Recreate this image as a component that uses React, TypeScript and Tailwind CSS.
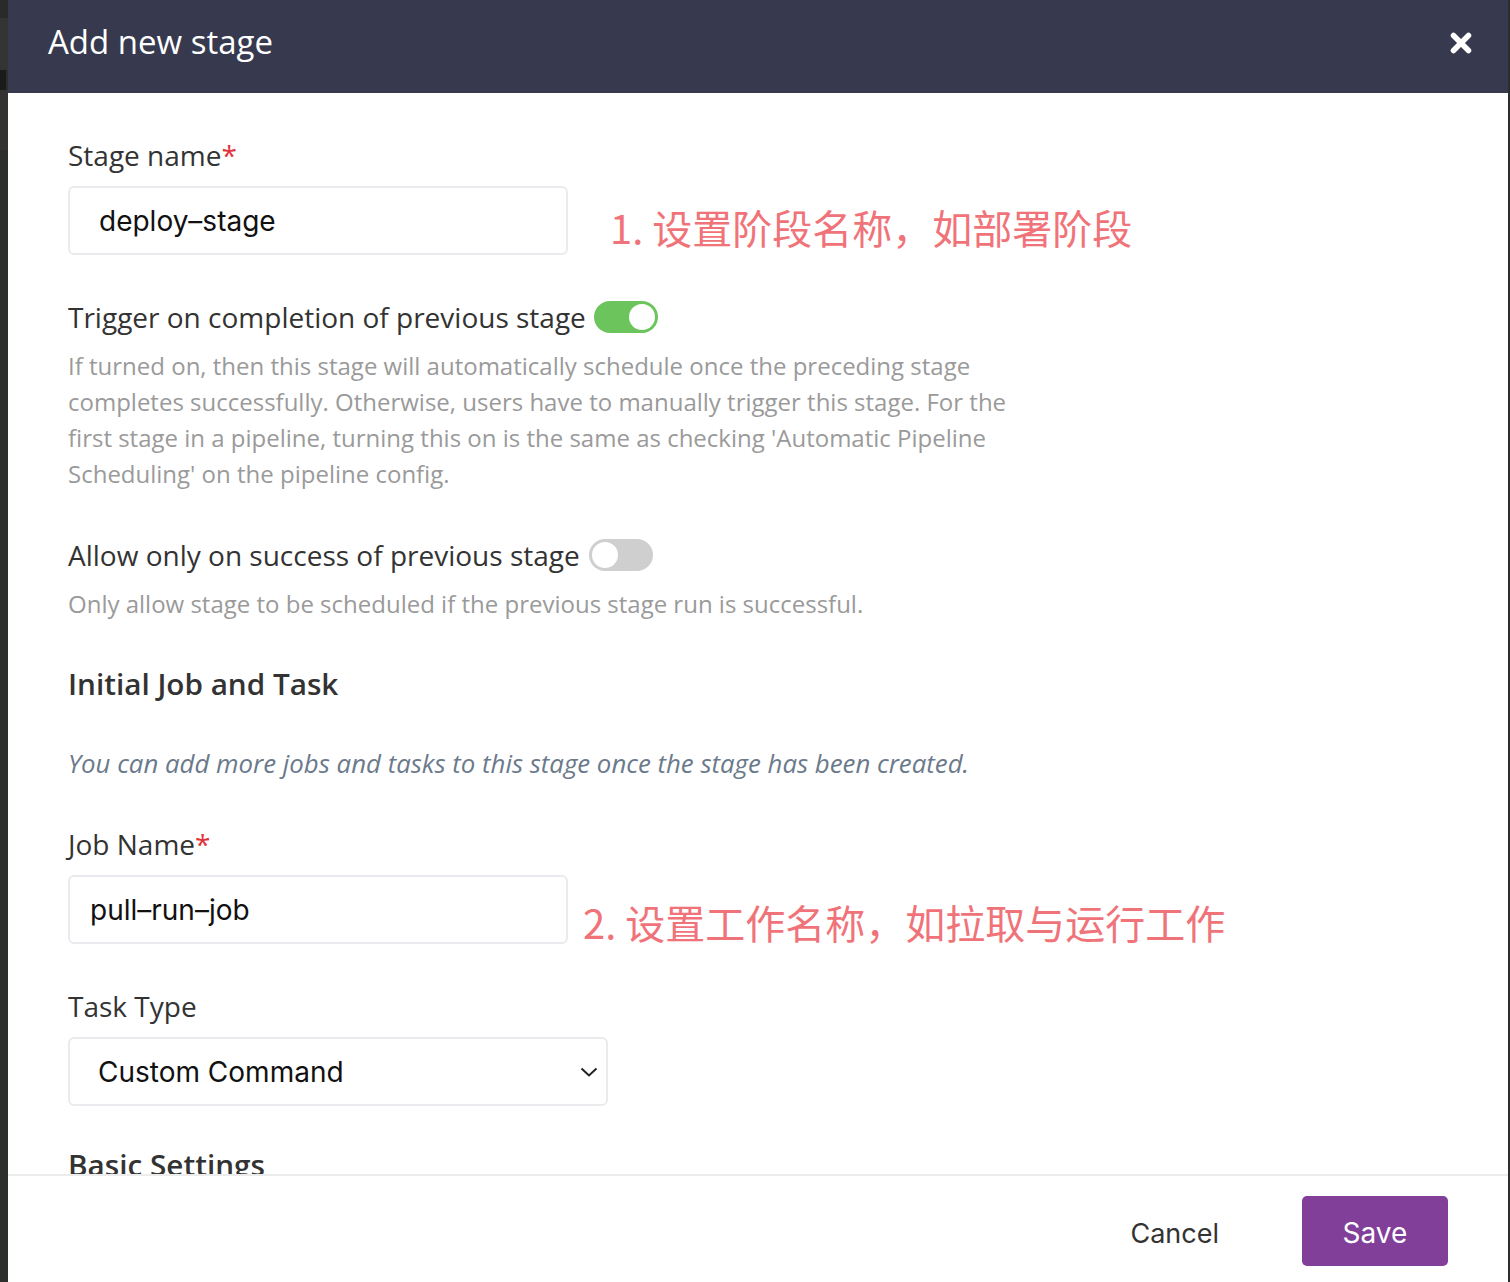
import React from "react";

const openSans = { fontFamily: '"Open Sans", "Noto Sans", sans-serif' };
const sysFont = { fontFamily: 'Inter, "Liberation Sans", sans-serif' };
const cjk = { fontFamily: '"Noto Sans CJK SC", "Noto Sans", sans-serif' };

function Toggle({ on }: { on: boolean }) {
  return (
    <span
      className={
        "inline-flex items-center w-[64px] h-[32px] rounded-full p-[3px] " +
        (on ? "bg-[#6cc55c] justify-end" : "bg-[#cfcfcf] justify-start")
      }
    >
      <span className="block w-[26px] h-[26px] rounded-full bg-white" />
    </span>
  );
}

function Label({ text, required }: { text: string; required?: boolean }) {
  return (
    <div className="text-[28px] leading-[36px] h-[36px] text-[#333333]">
      {text}
      {required && <span className="text-[#e0323b]">*</span>}
    </div>
  );
}

export default function App() {
  return (
    <div className="flex w-[1510px] h-[1282px] bg-[#2d2f2c] overflow-hidden" style={openSans}>
      <div className="w-[8px] flex flex-col">
        <div className="h-[18px] bg-[#2a2b29]" />
        <div className="h-[52px] bg-[#343432]" />
        <div className="h-[20px] bg-[#1a1a1a] w-[6px]" />
        <div className="h-[60px] bg-[#333331]" />
        <div className="flex-1 bg-[#2d2f2c]" />
      </div>
      <div className="w-[1500px] flex flex-col bg-white">
        <div className="h-[93px] shrink-0 bg-[#373a4f] flex items-center justify-between pl-[40px] pr-[36px]">
          <div className="text-white text-[33px] leading-[40px] mb-[10px]">Add new stage</div>
          <svg width="22" height="22" viewBox="0 0 22 22" className="mb-[8px]">
            <path d="M3.5 3.5 L18.5 18.5 M18.5 3.5 L3.5 18.5" stroke="white" strokeWidth="5.5" strokeLinecap="round" />
          </svg>
        </div>
        <div className="flex-1 overflow-hidden pl-[60px] pt-[44px]">
          <Label text="Stage name" required />
          <div className="flex items-center h-[69px] mt-[13px]">
            <div
              className="w-[500px] h-[69px] shrink-0 border-2 border-[#ebebef] rounded-[6px] flex items-center pl-[29px] text-[28px] text-[#111]"
              style={sysFont}
            >
              deploy–stage
            </div>
            <div className="ml-[42px] mt-[12px] text-[40px] leading-[40px] text-[#f0737a] whitespace-nowrap" style={cjk}>
              1. 设置阶段名称，如部署阶段
            </div>
          </div>

          <div className="flex items-center h-[36px] mt-[44px]">
            <Label text="Trigger on completion of previous stage" />
            <span className="ml-[8px] flex">
              <Toggle on />
            </span>
          </div>
          <div className="mt-[13px] w-[950px] text-[24px] leading-[36px] text-[#9a9a9a]">
            If turned on, then this stage will automatically schedule once the preceding stage completes successfully.
            Otherwise, users have to manually trigger this stage. For the first stage in a pipeline, turning this on is the
            same as checking 'Automatic Pipeline Scheduling' on the pipeline config.
          </div>

          <div className="flex items-center h-[36px] mt-[45px]">
            <Label text="Allow only on success of previous stage" />
            <span className="ml-[9px] flex">
              <Toggle on={false} />
            </span>
          </div>
          <div className="mt-[13px] text-[24px] leading-[36px] text-[#9a9a9a]">
            Only allow stage to be scheduled if the previous stage run is successful.
          </div>

          <div className="mt-[42px] text-[29.7px] leading-[40px] font-semibold text-[#333333]">Initial Job and Task</div>
          <div className="mt-[41px] text-[25.8px] leading-[36px] italic text-[#6b7a8b]">
            You can add more jobs and tasks to this stage once the stage has been created.
          </div>

          <div className="mt-[45px]">
            <Label text="Job Name" required />
          </div>
          <div className="flex items-center h-[69px] mt-[13px]">
            <div
              className="w-[500px] h-[69px] shrink-0 border-2 border-[#ebebef] rounded-[6px] flex items-center pl-[20px] text-[28px] text-[#111]"
              style={sysFont}
            >
              pull–run–job
            </div>
            <div className="ml-[15px] mt-[24px] text-[40px] leading-[40px] text-[#f0737a] whitespace-nowrap" style={cjk}>
              2. 设置工作名称，如拉取与运行工作
            </div>
          </div>

          <div className="mt-[44px]">
            <Label text="Task Type" />
          </div>
          <div
            className="mt-[13px] w-[540px] h-[69px] border-2 border-[#ebebef] rounded-[6px] flex items-center justify-between pl-[28px] pr-[8px] text-[28px] text-[#111]"
            style={sysFont}
          >
            <span>Custom Command</span>
            <svg width="18" height="12" viewBox="0 0 18 12">
              <path d="M1.5 2.5 L9 9.5 L16.5 2.5" stroke="#222" strokeWidth="2" fill="none" />
            </svg>
          </div>

          <div className="mt-[39px] text-[29.7px] leading-[40px] font-semibold text-[#333333]">Basic Settings</div>
        </div>
        <div className="h-[108px] shrink-0 border-t-2 border-[#ececec] flex items-center justify-end pr-[60px] pt-[4px]" style={sysFont}>
          <span className="text-[27px] text-[#333] mr-[83px] mt-[6px]">Cancel</span>
          <div className="w-[146px] h-[70px] rounded-[5px] bg-[#813f99] text-white text-[28px] flex items-center justify-center pt-[4px]">
            Save
          </div>
        </div>
      </div>
      <div className="w-[2px] bg-[#2d2d2d]" />
    </div>
  );
}
